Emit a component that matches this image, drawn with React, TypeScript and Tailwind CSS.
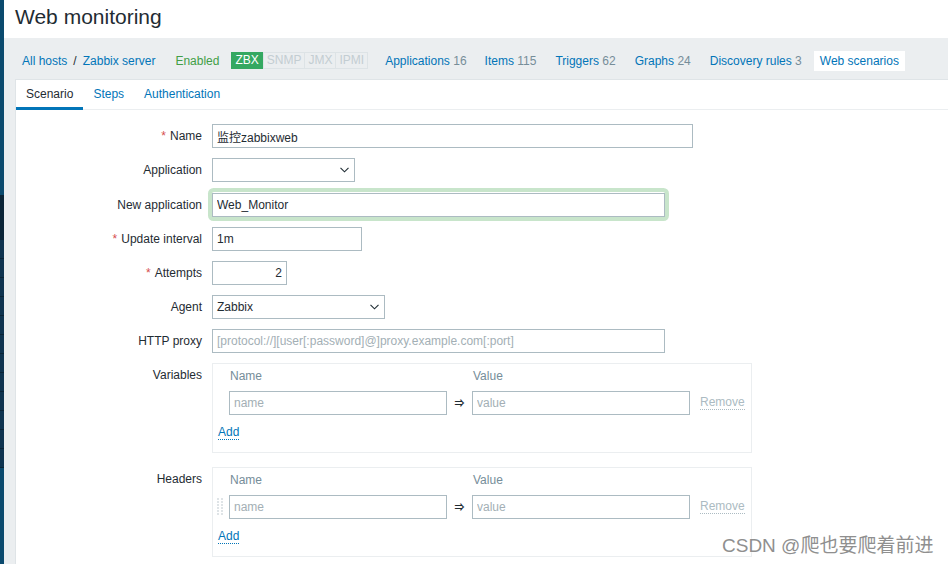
import React from "react";

const FONT = { fontFamily: '"Liberation Sans", Arial, "Noto Sans CJK SC", sans-serif' };

function Chevron() {
  return (
    <svg width="9" height="6" viewBox="0 0 9 6" className="shrink-0">
      <path d="M0.5 0.8 L4.5 4.8 L8.5 0.8" fill="none" stroke="#1f2c33" strokeWidth="1.1" />
    </svg>
  );
}

function DragHandle() {
  const dots = [];
  for (let r = 0; r < 6; r++) {
    dots.push(<rect key={`a${r}`} x="0" y={r * 3} width="2" height="2" fill="#dfe4e7" />);
    dots.push(<rect key={`b${r}`} x="4" y={r * 3} width="2" height="2" fill="#dfe4e7" />);
  }
  return (
    <svg width="6" height="18" viewBox="0 0 6 18">
      {dots}
    </svg>
  );
}

function Label({ text, required, top }: { text: string; required?: boolean; top?: boolean }) {
  return (
    <div
      className={`w-[186px] shrink-0 text-right text-[12px] leading-[14px] text-[#1f2c33] ${top ? "self-start pt-[5px]" : ""}`}
    >
      {required && <span className="text-[#d64e4e] mr-[4px]">*</span>}
      {text}
    </div>
  );
}

function TextInput({
  value,
  placeholder,
  width,
  right,
}: {
  value?: string;
  placeholder?: string;
  width: string;
  right?: boolean;
}) {
  return (
    <input
      readOnly
      value={value ?? ""}
      placeholder={placeholder}
      className={`${width} h-[24px] border border-[#acbbc2] bg-white px-[4px] text-[12px] text-[#1f2c33] outline-none placeholder:text-[#a3afb5] ${right ? "text-right" : ""}`}
      style={FONT}
    />
  );
}

function Select({ value, width }: { value: string; width: string }) {
  return (
    <div
      className={`${width} h-[24px] border border-[#acbbc2] bg-white pl-[4px] pr-[5px] flex items-center justify-between text-[12px] text-[#1f2c33]`}
    >
      <span>{value}</span>
      <Chevron />
    </div>
  );
}

function PairTable({ drag }: { drag?: boolean }) {
  return (
    <div className="w-[540px] h-[90px] border border-[#ebeef0] pl-[4px] pt-[5px] text-[12px] leading-[14px]">
      <div className="flex h-[14px] items-center text-[#768d99]">
        <span className="w-[12px]" />
        <span className="w-[218px] pl-px">Name</span>
        <span className="w-[25px]" />
        <span className="pl-px">Value</span>
      </div>
      <div className="mt-[8px] flex items-center h-[24px]">
        <span className="w-[12px] flex items-center">{drag && <DragHandle />}</span>
        <TextInput placeholder="name" width="w-[218px]" />
        <span className="w-[25px] text-center text-[10px] font-bold text-[#1f2c33] pt-px">⇒</span>
        <TextInput placeholder="value" width="w-[218px]" />
        <span className="ml-[10px] leading-[13px] text-[#acbbc2] border-b border-dotted border-[#acbbc2]">
          Remove
        </span>
      </div>
      <div className="mt-[10px] pl-px flex">
        <span className="leading-[14px] text-[#0275b8] border-b border-dotted border-[#0275b8]">
          Add
        </span>
      </div>
    </div>
  );
}

function NavLink({ name, count, className = "" }: { name: string; count?: string; className?: string }) {
  return (
    <span className={`text-[#0275b8] ${className}`}>
      {name}
      {count && <span className="text-[#768d99]"> {count}</span>}
    </span>
  );
}

function Sidebar() {
  const items = Array.from({ length: 12 });
  return (
    <div className="w-[4px] shrink-0 flex flex-col bg-[#0b4a6e]">
      <div className="h-[195px] bg-[#0b4a6e]" />
      <div className="h-[45px] bg-[#0a2437]" />
      {items.map((_, i) => (
        <div key={i} className="h-[19px] bg-[#0f3450] border-b border-[#0a2437]" />
      ))}
      <div className="flex-1 bg-[#0b4a6e]" />
    </div>
  );
}

export default function App() {
  return (
    <div className="relative flex h-[564px] w-[948px] overflow-hidden bg-[#ebeef0]" style={FONT}>
      <Sidebar />

      <div className="flex-1 flex flex-col min-w-0">
        {/* Header */}
        <header className="h-[38px] shrink-0 bg-white pl-[11px] flex items-center">
          <h1 className="text-[21px] leading-[24px] text-[#1f2c33] -mt-[5px]">Web monitoring</h1>
        </header>

        {/* Host navigation */}
        <nav className="h-[41px] shrink-0 flex items-center pl-[18px] pt-[4px] text-[12px] whitespace-nowrap">
          <NavLink name="All hosts" />
          <span className="mx-[6px] text-[#1f2c33]">/</span>
          <NavLink name="Zabbix server" />
          <span className="ml-[20px] text-[#429e47]">Enabled</span>
          <div className="ml-[12px] flex h-[17px] text-[12px] leading-[15px]">
            <span className="bg-[#34a861] border border-[#34a861] text-white px-[3px]">ZBX</span>
            <span className="border border-[#dde3e6] text-[#c3cdd2] px-[3px]">SNMP</span>
            <span className="border border-l-0 border-[#dde3e6] text-[#c3cdd2] px-[3px]">JMX</span>
            <span className="border border-l-0 border-[#dde3e6] text-[#c3cdd2] px-[3px]">IPMI</span>
          </div>
          <NavLink name="Applications" count="16" className="ml-[17px]" />
          <NavLink name="Items" count="115" className="ml-[18px]" />
          <NavLink name="Triggers" count="62" className="ml-[19px]" />
          <NavLink name="Graphs" count="24" className="ml-[19px]" />
          <NavLink name="Discovery rules" count="3" className="ml-[19px]" />
          <span className="ml-[12px] h-[20px] flex items-center bg-white px-[6px] text-[#0275b8]">
            Web scenarios
          </span>
        </nav>

        {/* Panel */}
        <div className="flex-1 ml-[11px] bg-white border-l border-t border-[#dfe4e7] flex flex-col">
          <div className="flex h-[30px] border-b border-[#ebeef0] text-[12px]">
            <span className="-mb-px h-[30px] px-[10px] flex items-center border-b-[3px] border-[#0275b8] text-[#1f2c33]">
              Scenario
            </span>
            <span className="h-[30px] px-[10px] flex items-center text-[#0275b8] pb-[3px]">Steps</span>
            <span className="h-[30px] px-[10px] flex items-center text-[#0275b8] pb-[3px]">Authentication</span>
          </div>

          <form className="pt-[14px] flex flex-col gap-[10px]">
            <div className="flex items-center gap-[10px]">
              <Label text="Name" required />
              <TextInput value="监控zabbixweb" width="w-[481px]" />
            </div>
            <div className="flex items-center gap-[10px]">
              <Label text="Application" />
              <Select value="" width="w-[143px]" />
            </div>
            <div className="flex items-center gap-[10px]">
              <Label text="New application" />
              <div className="rounded-[2px] shadow-[0_0_0_4px_#c8e5cb]">
                <TextInput value="Web_Monitor" width="w-[453px]" />
              </div>
            </div>
            <div className="flex items-center gap-[10px]">
              <Label text="Update interval" required />
              <TextInput value="1m" width="w-[150px]" />
            </div>
            <div className="flex items-center gap-[10px]">
              <Label text="Attempts" required />
              <TextInput value="2" width="w-[75px]" right />
            </div>
            <div className="flex items-center gap-[10px]">
              <Label text="Agent" />
              <Select value="Zabbix" width="w-[173px]" />
            </div>
            <div className="flex items-center gap-[10px]">
              <Label text="HTTP proxy" />
              <TextInput placeholder="[protocol://][user[:password]@]proxy.example.com[:port]" width="w-[453px]" />
            </div>
            <div className="flex gap-[10px]">
              <Label text="Variables" top />
              <PairTable />
            </div>
            <div className="flex gap-[10px] mt-[4px]">
              <Label text="Headers" top />
              <PairTable drag />
            </div>
          </form>
        </div>
      </div>

      {/* watermark */}
      <div
        className="absolute left-[722px] top-[535px] text-[19px] leading-[22px] text-[#8f8f8f] whitespace-nowrap"
        style={{ fontFamily: '"Liberation Sans", Arial, "Noto Sans CJK SC", sans-serif', textShadow: "0 0 2px #fff" }}
      >
        CSDN @爬也要爬着前进
      </div>
    </div>
  );
}
